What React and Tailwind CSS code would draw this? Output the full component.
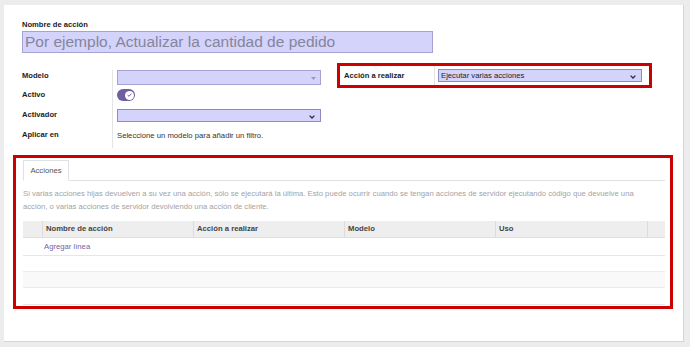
import React from "react";

const font = { fontFamily: '"Liberation Sans", Arial, sans-serif' };

const Caret = () => (
  <svg width="5" height="3" viewBox="0 0 5 3" className="absolute right-[4px] top-[6px]">
    <path d="M0 0 L5 0 L2.5 3 Z" fill="#9a9ab0" />
  </svg>
);

const Chevron = () => (
  <svg width="6" height="4" viewBox="0 0 6 4" className="absolute right-[5px] top-[5px]">
    <path d="M0.6 0.6 L3 3 L5.4 0.6" fill="none" stroke="#2b2b3a" strokeWidth="1.3" />
  </svg>
);

const columns = [
  { name: "", w: "w-[19px]" },
  { name: "Nombre de acción", w: "w-[151px]" },
  { name: "Acción a realizar", w: "w-[151px]" },
  { name: "Modelo", w: "w-[151px]" },
  { name: "Uso", w: "w-[152px]" },
  { name: "", w: "flex-1" },
];

export default function App() {
  return (
    <div
      className="w-[690px] h-[347px] bg-[#ececec] pt-[5px] pl-[4px] overflow-hidden"
      style={font}
    >
      <div className="w-[680px] h-[337px] bg-white border-r border-b border-[#d3d4dc]">
        {/* title */}
        <div className="ml-[18px] pt-[15px]">
          <div className="text-[7.6px] leading-[10px] font-bold text-[#222]">
            Nombre de acción
          </div>
          <div className="mt-[1px] w-[411px] h-[22px] bg-[#d3d3fb] border border-[#a6a2d4] flex items-center pl-[2px]">
            <span className="text-[15.5px] leading-none text-[#85859c]">
              Por ejemplo, Actualizar la cantidad de pedido
            </span>
          </div>
        </div>

        {/* fields */}
        <div className="flex ml-[18px] mt-[10px]">
          <div className="w-[299px] pt-[7px] text-[7.6px]">
            <div className="flex h-[18px]">
              <div className="w-[90px] font-bold text-[#222] leading-[12px]">Modelo</div>
              <div className="flex-1 border-l border-[#e4e4e4] pl-[4px]">
                <div className="relative w-[204px] h-[15px] bg-[#d3d3fb] border border-[#a6a2d4]">
                  <Caret />
                </div>
              </div>
            </div>
            <div className="flex h-[19px]">
              <div className="w-[90px] font-bold text-[#222] leading-[12px] pt-[1px]">Activo</div>
              <div className="flex-1 border-l border-[#e4e4e4] pl-[4px] pt-[1px]">
                <div className="w-[18px] h-[12px] rounded-full bg-[#6f5f9e] flex items-center justify-end pr-[1.5px]">
                  <div className="w-[9px] h-[9px] rounded-full bg-white flex items-center justify-center">
                    <svg width="5" height="4" viewBox="0 0 5 4">
                      <path d="M0.6 2 L2 3.3 L4.4 0.7" fill="none" stroke="#6f5f9e" strokeWidth="1" />
                    </svg>
                  </div>
                </div>
              </div>
            </div>
            <div className="flex h-[19px]">
              <div className="w-[90px] font-bold text-[#222] leading-[12px] pt-[2px]">Activador</div>
              <div className="flex-1 border-l border-[#e4e4e4] pl-[4px] pt-[2px]">
                <div className="relative w-[204px] h-[13px] bg-[#d3d3fb] border border-[#8f89c4]">
                  <Chevron />
                </div>
              </div>
            </div>
            <div className="flex h-[22px]">
              <div className="w-[90px] font-bold text-[#222] leading-[12px] pt-[3px]">Aplicar en</div>
              <div className="flex-1 border-l border-[#e4e4e4] pl-[4px] pt-[4px] leading-[12px] text-[7.7px] text-[#333]">
                Seleccione un modelo para añadir un filtro.
              </div>
            </div>
          </div>

          <div className="ml-[16px] w-[315px] h-[25px] border-[3px] border-[#cc0000] flex text-[7.6px]">
            <div className="w-[94px] pl-[4px] font-bold text-[#222] flex items-center">
              Acción a realizar
            </div>
            <div className="flex-1 border-l border-[#e4e4e4] pl-[3px] flex items-center">
              <div className="relative w-[204px] h-[13px] bg-[#d3d3fb] border border-[#8f89c4] flex items-center pl-[2px] text-[7.7px] text-[#222] leading-none">
                Ejecutar varias acciones
                <Chevron />
              </div>
            </div>
          </div>
        </div>

        {/* notebook */}
        <div className="ml-[9px] mt-[7px] w-[660px] border-[3px] border-[#cc0000] pt-[2px] pl-[7px] pr-[5px] pb-[1px]">
          <div className="flex border-b border-[#dee2e6] h-[21px]">
            <div className="w-[46px] h-[21px] -mb-px border border-[#dee2e6] border-b-white bg-white flex items-center justify-center text-[7.7px] text-[#555]">
              Acciones
            </div>
          </div>

          <p className="mt-[6px] text-[7.7px] leading-[13px] text-[#a3a3a3]">
            Si varias acciones hijas devuelven a su vez una acción, sólo se ejecutará la última. Esto puede ocurrir cuando se tengan acciones de servidor ejecutando código que devuelve una
            <br />
            acción, o varias acciones de servidor devolviendo una acción de cliente.
          </p>

          <div className="mt-[8px] text-[7.7px]">
            <div className="flex h-[17px] bg-[#eeeeee] border-b border-[#e0e0e0]">
              {columns.map((c, i) => (
                <div
                  key={i}
                  className={`${c.w} h-full flex items-center pl-[3px] font-bold text-[#444] ${
                    i > 0 ? "border-l border-[#dcdcdc]" : ""
                  }`}
                >
                  {c.name}
                </div>
              ))}
            </div>
            <div className="flex h-[18px] border-b border-[#e6e6e6] items-center">
              <div className="w-[19px]" />
              <div className="pl-[2px] text-[#6f66a6]">Agregar línea</div>
            </div>
            <div className="h-[16px] border-b border-[#ececec]" />
            <div className="h-[16px] border-b border-[#ececec] bg-[#f9f9f9]" />
            <div className="h-[17px] border-b border-[#e6e6e6]" />
          </div>
        </div>
      </div>
    </div>
  );
}
